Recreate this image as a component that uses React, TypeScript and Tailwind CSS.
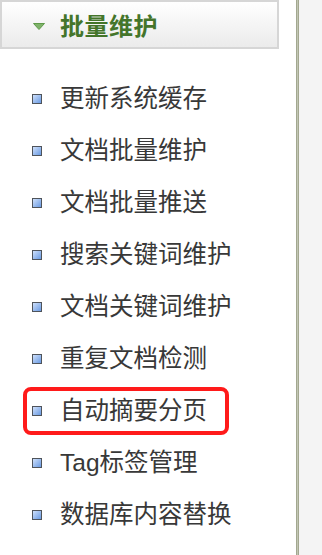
import React from "react";

const items = [
  "更新系统缓存",
  "文档批量维护",
  "文档批量推送",
  "搜索关键词维护",
  "文档关键词维护",
  "重复文档检测",
  "自动摘要分页",
  "Tag标签管理",
  "数据库内容替换",
];

function Bullet() {
  return (
    <span className="inline-block w-[10px] h-[10px] border-[1.5px] border-[#4f545b] bg-gradient-to-br from-[#cfe0fa] to-[#6a9ae2] shrink-0" />
  );
}

export default function App() {
  return (
    <div
      className="w-[322px] h-[555px] flex bg-white overflow-hidden"
      style={{ fontFamily: '"Liberation Sans", "Noto Sans CJK SC", sans-serif' }}
    >
      <div className="w-[296px] shrink-0 flex flex-col">
        <div className="w-[279px] h-[49px] border-2 border-[#d6d6d6] bg-gradient-to-b from-white to-[#ebebeb] flex items-center pl-[31px] pt-[4px]">
          <svg width="12" height="7" viewBox="0 0 12 7" className="shrink-0">
            <path d="M0.5 0.5 L11.5 0.5 L6 6.5 Z" fill="#7fb36a" stroke="#5f9a4a" strokeWidth="1" strokeLinejoin="round" />
          </svg>
          <span className="ml-[15px] text-[24px] font-bold text-[#44752a] leading-none tracking-[0.5px]">
            批量维护
          </span>
        </div>
        <ul className="mt-[24px] flex flex-col">
          {items.map((t, i) => (
            <li key={t} className="h-[52px] flex items-center">
              {i === 6 ? (
                <div className="ml-[23px] w-[206px] h-[48px] border-[4px] border-[#ff1a1a] rounded-[8px] flex items-center pl-[5px]">
                  <Bullet />
                  <span className="ml-[18px] text-[24.5px] text-[#383838] leading-none">{t}</span>
                </div>
              ) : (
                <div className="flex items-center pl-[32px]">
                  <Bullet />
                  <span className="ml-[18px] text-[24.5px] text-[#383838] leading-none">{t}</span>
                </div>
              )}
            </li>
          ))}
        </ul>
      </div>
      <div className="w-[3px] shrink-0 bg-[#c2c6b4] border-x border-[#a3a890]" />
      <div className="flex-1 bg-[#f4f4f4]" />
    </div>
  );
}
